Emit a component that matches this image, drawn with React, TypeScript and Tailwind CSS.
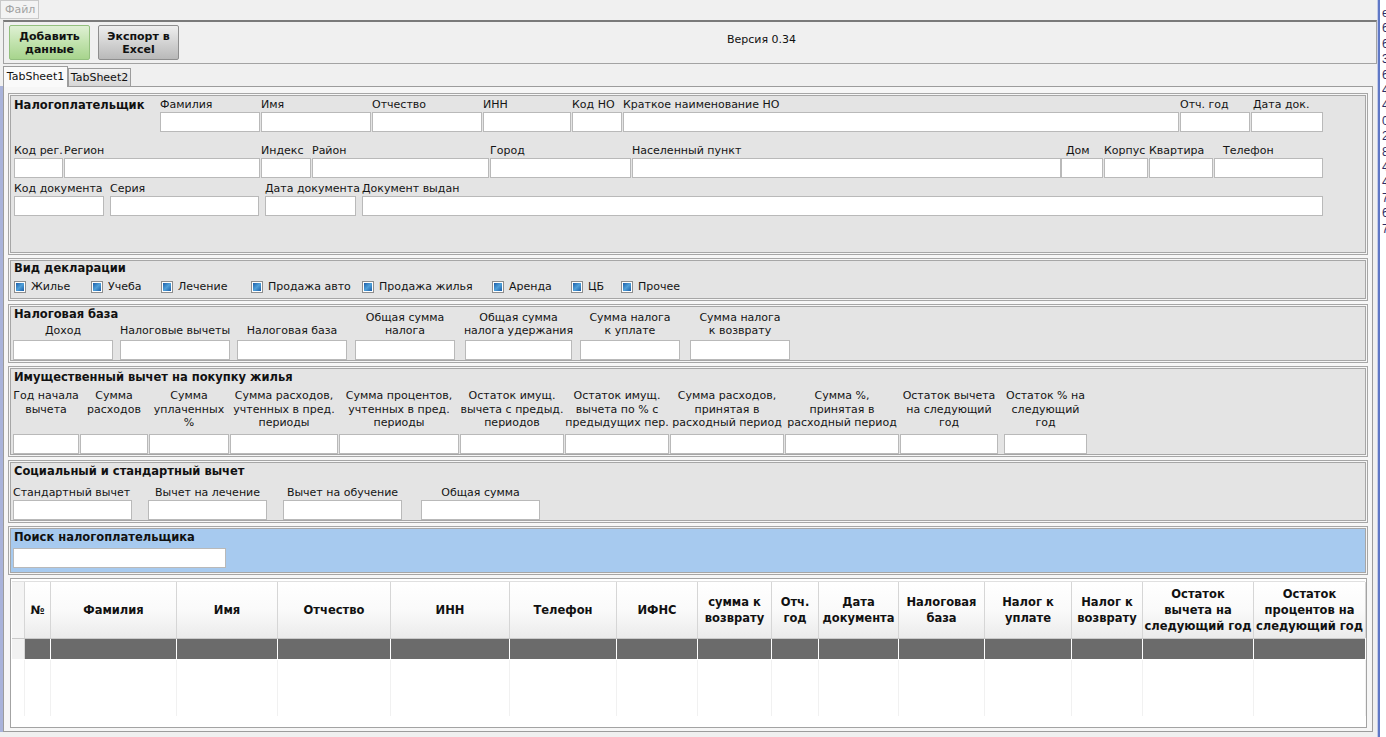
import React from "react";

const lbl = "text-[11px] whitespace-nowrap text-[#141414]";
const title = "text-[11.5px] font-bold leading-[14px] whitespace-nowrap text-[#111]";

function Box({ className = "" }: { className?: string }) {
  return <div className={`h-[20px] shrink-0 bg-white border border-[#b9b9b9] ${className}`} />;
}

function F({ label, w, box, lc = "" }: { label: string; w: string; box: string; lc?: string }) {
  return (
    <div className={`flex flex-col shrink-0 ${w}`}>
      <div className={`${lbl} h-[15px] leading-[15px] ${lc}`}>{label}</div>
      <Box className={box} />
    </div>
  );
}

function Group({ className = "", children }: { className?: string; children: React.ReactNode }) {
  return (
    <div className={`shrink-0 border-[3px] border-double border-[#a6a6a6] bg-clip-padding ${className}`}>
      {children}
    </div>
  );
}

function Check({ label, w }: { label: string; w: string }) {
  return (
    <div className={`flex items-center gap-[5px] shrink-0 ${w}`}>
      <div className="w-[12px] h-[12px] border border-[#8d8d8d] bg-white p-[1px]">
        <div className="w-full h-full bg-linear-to-br from-[#1c5ea8] via-[#4f9fd8] to-[#1c5ea8]" />
      </div>
      <span className={`${lbl} leading-[14px]`}>{label}</span>
    </div>
  );
}

function Lines({ lines }: { lines: string[] }) {
  return (
    <>
      {lines.map((l, i) => (
        <div key={i}>{l}</div>
      ))}
    </>
  );
}

const baseFields: { lines: string[]; w: string }[] = [
  { lines: ["Доход"], w: "w-[100px] mr-[7px]" },
  { lines: ["Налоговые вычеты"], w: "w-[110px] mr-[7px]" },
  { lines: ["Налоговая база"], w: "w-[110px] mr-[8px]" },
  { lines: ["Общая сумма", "налога"], w: "w-[100px] mr-[10px]" },
  { lines: ["Общая сумма", "налога удержания"], w: "w-[107px] mr-[8px]" },
  { lines: ["Сумма налога", "к уплате"], w: "w-[100px] mr-[10px]" },
  { lines: ["Сумма налога", "к возврату"], w: "w-[100px]" },
];

const propFields: { lines: string[]; w: string }[] = [
  { lines: ["Год начала", "вычета"], w: "w-[66px] mr-[1px]" },
  { lines: ["Сумма", "расходов"], w: "w-[68px] mr-[1px]" },
  { lines: ["Сумма", "уплаченных", "%"], w: "w-[80px] mr-[1px]" },
  { lines: ["Сумма расходов,", "учтенных в пред.", "периоды"], w: "w-[108px] mr-[1px]" },
  { lines: ["Сумма процентов,", "учтенных в пред.", "периоды"], w: "w-[120px] mr-[1px]" },
  { lines: ["Остаток имущ.", "вычета с предыд.", "периодов"], w: "w-[104px] mr-[1px]" },
  { lines: ["Остаток имущ.", "вычета  по % с", "предыдущих пер."], w: "w-[104px] mr-[1px]" },
  { lines: ["Сумма расходов,", "принятая в", "расходный период"], w: "w-[114px] mr-[1px]" },
  { lines: ["Сумма %,", "принятая в", "расходный период"], w: "w-[114px] mr-[1px]" },
  { lines: ["Остаток вычета", "на следующий", "год"], w: "w-[98px] mr-[6px]" },
  { lines: ["Остаток % на", "следующий", "год"], w: "w-[83px]" },
];

const columns: string[][] = [
  [""],
  ["№"],
  ["Фамилия"],
  ["Имя"],
  ["Отчество"],
  ["ИНН"],
  ["Телефон"],
  ["ИФНС"],
  ["сумма к", "возврату"],
  ["Отч.", "год"],
  ["Дата", "документа"],
  ["Налоговая", "база"],
  ["Налог к", "уплате"],
  ["Налог к", "возврату"],
  ["Остаток", "вычета на", "следующий год"],
  ["Остаток", "процентов на", "следующий год"],
];

const gridCols =
  "grid grid-cols-[13px_26px_126px_101px_113px_119px_107px_81px_74px_47px_80px_86px_87px_71px_111px_112px]";

const digits = ["е", "6", "6", "3", "6", "4", "4", "0", "2", "8", "4", "4", "7", "6", "7"];

export default function App() {
  return (
    <div className="flex w-full h-[737px] overflow-hidden bg-white font-['DejaVu_Sans',sans-serif]">
      <div className="w-[1377px] shrink-0 flex flex-col bg-[#f0f0f0]">
        {/* menu */}
        <div className="h-[20px] flex shrink-0">
          <div className="w-[39px] h-[19px] border border-[#c9c9c9] bg-[#f3f3f3] text-[11px] leading-[17px] pl-[4px] text-[#a3a3a3]">
            Файл
          </div>
        </div>

        {/* toolbar */}
        <div className="ml-[3px] w-[1374px] h-[44px] shrink-0 border border-[#a3a3a3] border-t-2 border-t-[#7a7a7a] flex items-center pl-[5px]">
          <button className="w-[81px] h-[35px] rounded-[2px] border border-[#93c07e] bg-linear-to-b from-[#dff0d4] via-[#c2e3ae] to-[#a7d48d] text-[11px] font-bold leading-[13px] text-[#111]">
            Добавить
            <br />
            данные
          </button>
          <button className="ml-[8px] w-[81px] h-[35px] rounded-[2px] border border-[#8e8e8e] bg-linear-to-b from-[#eeeeee] via-[#d3d3d3] to-[#b9b9b9] text-[11px] font-bold leading-[13px] text-[#111]">
            Экспорт в
            <br />
            Excel
          </button>
          <div className="ml-[548px] text-[11px] text-[#111] -mt-[4px]">Версия 0.34</div>
        </div>

        {/* tabs */}
        <div className="h-[22px] shrink-0 flex items-end pl-[3px]">
          <div className="relative z-10 w-[65px] h-[21px] -mb-[1px] bg-[#fafafa] border border-b-0 border-[#9c9c9c] text-[11px] leading-[20px] text-center text-[#111]">
            TabSheet1
          </div>
          <div className="w-[63px] h-[18px] bg-linear-to-b from-[#f2f2f2] to-[#d6d6d6] border border-b-0 border-[#9c9c9c] text-[11px] leading-[18px] text-center text-[#111]">
            TabSheet2
          </div>
        </div>

        {/* content */}
        <div className="flex flex-1 min-h-0">
          <div className="w-[3px] shrink-0 bg-[#a9b3da]" />
          <div className="w-[1370px] h-[646px] shrink-0 border border-[#9c9c9c] bg-[#f6f6f6] pt-[6px] px-[4px] flex flex-col gap-[3px]">
            {/* Налогоплательщик */}
            <Group className="h-[162px] bg-[#e4e4e4] pl-[3px] pt-[1px]">
              <div className="flex items-start">
                <div className={`w-[146px] ${title} pt-[1px]`}>Налогоплательщик</div>
                <F label="Фамилия" w="w-[101px]" box="mr-[1px]" />
                <F label="Имя" w="w-[111px]" box="mr-[1px]" />
                <F label="Отчество" w="w-[111px]" box="mr-[1px]" />
                <F label="ИНН" w="w-[89px]" box="mr-[1px]" />
                <F label="Код НО" w="w-[51px]" box="mr-[1px]" />
                <F label="Краткое наименование НО" w="w-[557px]" box="mr-[1px]" />
                <F label="Отч. год" w="w-[71px]" box="mr-[1px]" />
                <F label="Дата док." w="w-[72px]" box="" lc="pl-[2px]" />
              </div>
              <div className="flex items-start mt-[11px]">
                <F label="Код рег." w="w-[50px]" box="mr-[1px]" />
                <F label="Регион" w="w-[197px]" box="mr-[1px]" />
                <F label="Индекс" w="w-[51px]" box="mr-[1px]" />
                <F label="Район" w="w-[178px]" box="mr-[1px]" />
                <F label="Город" w="w-[142px]" box="mr-[1px]" />
                <F label="Населенный пункт" w="w-[429px]" box="" />
                <F label="Дом" w="w-[43px]" box="mr-[1px]" lc="pl-[5px]" />
                <F label="Корпус" w="w-[45px]" box="mr-[1px]" />
                <F label="Квартира" w="w-[65px]" box="mr-[1px]" />
                <F label="Телефон" w="w-[109px]" box="" lc="pl-[9px]" />
              </div>
              <div className="flex items-start mt-[3px]">
                <F label="Код документа" w="w-[96px]" box="mr-[6px]" />
                <F label="Серия" w="w-[155px]" box="mr-[6px]" />
                <F label="Дата документа" w="w-[97px]" box="mr-[6px]" />
                <F label="Документ выдан" w="w-[961px]" box="" />
              </div>
            </Group>

            {/* Вид декларации */}
            <Group className="h-[43px] bg-[#e4e4e4] pl-[3px]">
              <div className={title}>Вид декларации</div>
              <div className="flex mt-[5px]">
                <Check label="Жилье" w="w-[77px]" />
                <Check label="Учеба" w="w-[70px]" />
                <Check label="Лечение" w="w-[90px]" />
                <Check label="Продажа авто" w="w-[111px]" />
                <Check label="Продажа жилья" w="w-[130px]" />
                <Check label="Аренда" w="w-[79px]" />
                <Check label="ЦБ" w="w-[50px]" />
                <Check label="Прочее" w="w-[80px]" />
              </div>
            </Group>

            {/* Налоговая база */}
            <Group className="h-[59px] bg-[#e4e4e4] pl-[2px]">
              <div className={`${title} pl-[1px]`}>Налоговая база</div>
              <div className="flex -mt-[11px]">
                {baseFields.map((f, i) => (
                  <div key={i} className={`flex flex-col shrink-0 ${f.w}`}>
                    <div className={`${lbl} h-[27px] mb-[3px] leading-[13px] flex flex-col justify-end items-center text-center`}>
                      <Lines lines={f.lines} />
                    </div>
                    <Box className="w-full" />
                  </div>
                ))}
              </div>
            </Group>

            {/* Имущественный вычет */}
            <Group className="h-[91px] bg-[#e4e4e4] pl-[2px] pt-[1px]">
              <div className={`${title} pl-[1px]`}>Имущественный вычет на покупку жилья</div>
              <div className="flex mt-[5px]">
                {propFields.map((f, i) => (
                  <div key={i} className={`flex flex-col shrink-0 ${f.w}`}>
                    <div className={`${lbl} h-[41px] mb-[4px] leading-[13.5px] flex flex-col items-center text-center`}>
                      <Lines lines={f.lines} />
                    </div>
                    <Box className="w-full" />
                  </div>
                ))}
              </div>
            </Group>

            {/* Социальный и стандартный вычет */}
            <Group className="h-[63px] bg-[#e4e4e4] pl-[2px] pt-[1px]">
              <div className={`${title} pl-[1px]`}>Социальный и стандартный вычет</div>
              <div className="flex mt-[7px]">
                <div className="flex flex-col w-[119px] mr-[16px]">
                  <div className={`${lbl} h-[15px] leading-[15px]`}>Стандартный вычет</div>
                  <Box className="w-full" />
                </div>
                <div className="flex flex-col w-[119px] mr-[16px]">
                  <div className={`${lbl} h-[15px] leading-[15px] text-center`}>Вычет на лечение</div>
                  <Box className="w-full" />
                </div>
                <div className="flex flex-col w-[119px] mr-[19px]">
                  <div className={`${lbl} h-[15px] leading-[15px] text-center`}>Вычет на обучение</div>
                  <Box className="w-full" />
                </div>
                <div className="flex flex-col w-[119px]">
                  <div className={`${lbl} h-[15px] leading-[15px] text-center`}>Общая сумма</div>
                  <Box className="w-full" />
                </div>
              </div>
            </Group>

            {/* Поиск */}
            <Group className="h-[49px] bg-[#a7caef] pl-[2px] pt-[1px]">
              <div className={`${title} pl-[1px]`}>Поиск налогоплательщика</div>
              <Box className="mt-[4px] w-[213px]" />
            </Group>

            {/* Таблица */}
            <div className="ml-[2px] mr-[1px] h-[150px] shrink-0 border border-[#a3a3a3] bg-white px-[1px] pt-[2px]">
              <div className="border-t border-[#e0e0e0]">
                <div className={`${gridCols} h-[57px] border-b border-[#c9c9c9]`}>
                  {columns.map((c, i) => (
                    <div
                      key={i}
                      className={`flex flex-col items-center justify-center text-center border-r border-[#d6d6d6] text-[11.5px] font-bold leading-[16px] text-[#111] whitespace-nowrap overflow-hidden ${
                        i === 0 ? "bg-[#f4f4f4]" : "bg-linear-to-b from-white via-[#fafafa] to-[#ebebeb]"
                      }`}
                    >
                      <Lines lines={c} />
                    </div>
                  ))}
                </div>
                <div className={`${gridCols} h-[21px] border-b border-white`}>
                  {columns.map((_, i) => (
                    <div
                      key={i}
                      className={i === 0 ? "bg-[#f2f2f2] border-r border-[#d6d6d6]" : "bg-[#6b6b6b] border-r border-white"}
                    />
                  ))}
                </div>
                <div className={`${gridCols} h-[56px]`}>
                  {columns.map((_, i) => (
                    <div key={i} className="border-r border-[#f1f1f1]" />
                  ))}
                </div>
              </div>
            </div>
          </div>
        </div>
        <div className="h-[5px] shrink-0" />
      </div>

      {/* right edge */}
      <div className="w-[1px] shrink-0 bg-[#c3cbe8]" />
      <div className="w-[2px] shrink-0 bg-[#5f78c6]" />
      <div className="flex-1 overflow-hidden bg-white pt-[6px] pl-[2px]">
        {digits.map((d, i) => (
          <div key={i} className="text-[12px] leading-[15.4px] text-[#2e2e66] font-['Liberation_Sans',sans-serif]">
            {d}
          </div>
        ))}
      </div>
    </div>
  );
}
